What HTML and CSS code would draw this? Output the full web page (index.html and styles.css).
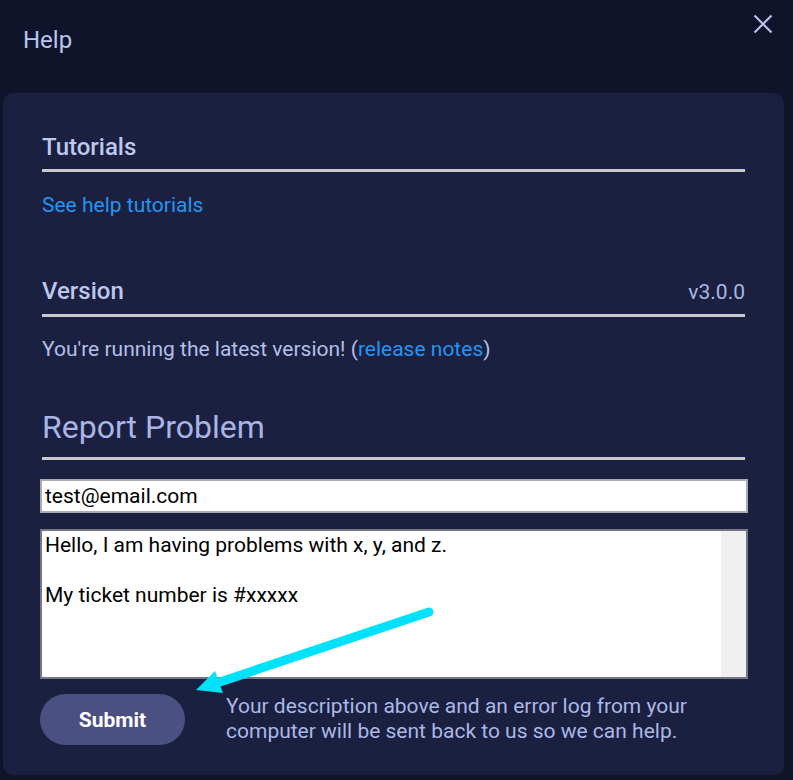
FILE: index.html
```html
<!DOCTYPE html>
<html lang="en">
<head>
<meta charset="utf-8">
<title>Help</title>
<link rel="stylesheet" href="styles.css">
</head>
<body>
<header class="top">
  <h1 class="title">Help</h1>
  <button class="close" aria-label="Close">
    <svg width="20" height="20" viewBox="0 0 20 20"><path d="M1.5 1.5 L18.5 18.5 M18.5 1.5 L1.5 18.5" stroke="#b7c3ee" stroke-width="2.2" fill="none"/></svg>
  </button>
</header>
<main class="panel">
  <section class="sec">
    <h2 class="sec-head">Tutorials</h2>
    <a class="link first-link" href="#">See help tutorials</a>
  </section>
  <section class="sec version">
    <h2 class="sec-head"><span>Version</span><span class="ver">v3.0.0</span></h2>
    <p class="txt">You're running the latest version! (<a class="link" href="#">release notes</a>)</p>
  </section>
  <section class="sec report">
    <h2 class="sec-head big">Report Problem</h2>
    <input class="field" type="text" value="test@email.com">
    <textarea class="area">Hello, I am having problems with x, y, and z.

My ticket number is #xxxxx</textarea>
    <div class="foot">
      <button class="submit">Submit</button>
      <p class="desc">Your description above and an error log from your computer will be sent back to us so we can help.</p>
    </div>
  </section>
</main>
<svg class="arrow" width="793" height="780" viewBox="0 0 793 780">
  <line x1="429" y1="612" x2="214" y2="684" stroke="#00e1fb" stroke-width="9" stroke-linecap="round"/>
  <polygon points="196,690 215,671 223,693" fill="#00e1fb"/>
</svg>
</body>
</html>
```
FILE: styles.css
```css
* { box-sizing: border-box; }
html, body { margin: 0; padding: 0; }
body {
  background: #10142a;
  font-family: Roboto, "Noto Sans", sans-serif;
  color: #b3c0ea;
  width: 793px;
  height: 780px;
  overflow: hidden;
  position: relative;
}
.top {
  height: 93px;
  display: flex;
  justify-content: space-between;
  align-items: flex-start;
  padding: 24px 20px 0 23px;
}
.title {
  margin: 0;
  font-size: 24px;
  line-height: 32px;
  font-weight: 400;
  color: #b8c6f0;
}
.close {
  background: none;
  border: 0;
  padding: 0;
  margin-top: -10px;
  width: 20px;
  height: 20px;
  display: block;
}
.close svg { display: block; }
.panel {
  margin: 0 9px 0 3px;
  height: 682px;
  background: #1b1f40;
  border-radius: 10px;
  padding: 39px 39px 0 39px;
}
.sec-head {
  margin: 0;
  font-size: 24px;
  line-height: 30px;
  font-weight: 500;
  color: #bcc8ec;
  padding-bottom: 7px;
  border-bottom: 3px solid #c9c9c9;
  display: flex;
  justify-content: space-between;
  align-items: baseline;
}
.ver {
  font-size: 21px;
  font-weight: 400;
  color: #aab8e4;
}
.link {
  color: #2196f3;
  text-decoration: none;
  font-size: 21px;
  line-height: 24px;
}
.first-link {
  display: block;
  margin-top: 21px;
}
.version { margin-top: 59px; }
.txt {
  margin: 20px 0 0;
  font-size: 21px;
  line-height: 24px;
  color: #b3c0ea;
}
.report { margin-top: 47px; }
.big {
  font-size: 32px;
  line-height: 38px;
  font-weight: 400;
  color: #a9b5e6;
  padding-bottom: 11px;
}
.field {
  display: block;
  margin: 19px -3px 0 -2px;
  width: calc(100% + 5px);
  height: 34px;
  border: 2px solid #a9a9b1;
  background: #fff;
  font-family: Roboto, sans-serif;
  font-size: 21px;
  color: #000;
  padding: 0 3px;
  outline: none;
}
.area {
  display: block;
  margin: 16px -3px 0 -2px;
  width: calc(100% + 5px);
  height: 150px;
  border: 2px solid #757583;
  background: linear-gradient(to left, #efefef 25px, #fff 25px);
  font-family: Roboto, sans-serif;
  font-size: 21px;
  line-height: 25px;
  color: #000;
  padding: 2px 28px 2px 3px;
  resize: none;
  overflow: hidden;
  outline: none;
}
.foot {
  display: flex;
  align-items: flex-start;
  margin: 15px 0 0 -2px;
}
.submit {
  flex: none;
  width: 145px;
  height: 51px;
  border: 0;
  border-radius: 26px;
  background: #4b5083;
  color: #fff;
  font-family: Roboto, sans-serif;
  font-size: 21px;
  font-weight: 700;
}
.desc {
  margin: 0 0 0 41px;
  font-size: 21px;
  line-height: 25px;
  color: #a9b8e6;
}
.arrow {
  position: absolute;
  left: 0;
  top: 0;
  pointer-events: none;
}
```
